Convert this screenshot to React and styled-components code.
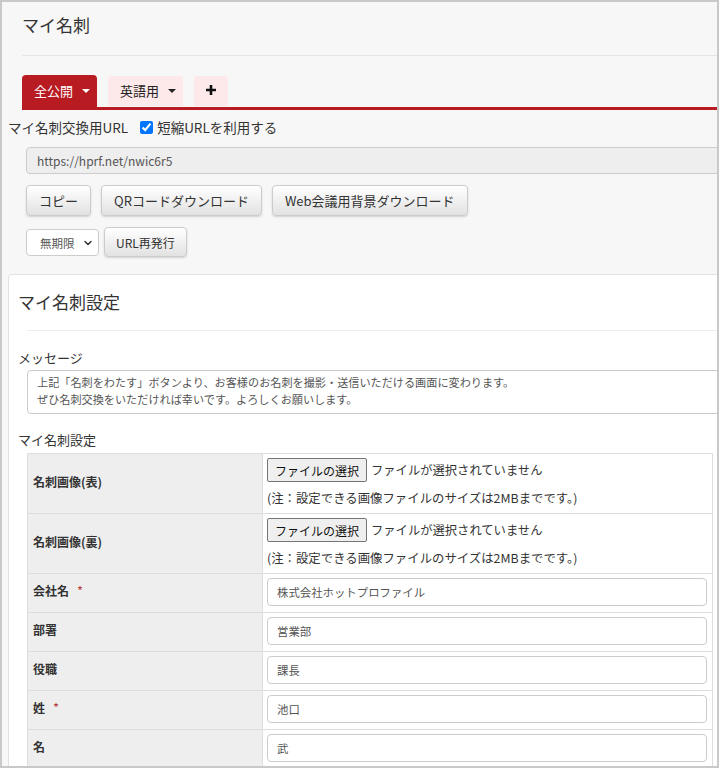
import styled, { createGlobalStyle } from "styled-components";
import { ChevronDown } from "lucide-react";

const GlobalStyle = createGlobalStyle`
  html, body {
    margin: 0;
    padding: 0;
    background: #ffffff;
  }
  body {
    font-family: "Noto Sans CJK JP", "Noto Sans", sans-serif;
    color: #333;
  }
  * {
    box-sizing: border-box;
  }
`;

const Frame = styled.div`
  width: 719px;
  height: 768px;
  border: 2px solid #c9c9c9;
  background: #f7f7f7;
  overflow: hidden;
`;

const PageHeader = styled.div`
  margin-left: 20px;
  padding: 11px 0 18px;
  border-bottom: 1px solid #e5e5e5;
`;

const Title = styled.h1`
  margin: 0;
  font-size: 17px;
  font-weight: 400;
  line-height: 24px;
  color: #333;
`;

const Tabs = styled.div`
  display: flex;
  align-items: flex-start;
  gap: 11px;
  margin: 19px 0 0 20px;
  border-bottom: 3px solid #b81c22;
`;

const Tab = styled.div`
  display: flex;
  align-items: center;
  justify-content: ${(p) => (p.$narrow ? "center" : "flex-start")};
  gap: 9px;
  width: ${(p) => (p.$narrow ? "34px" : "75px")};
  height: ${(p) => (p.$active ? "32px" : "30px")};
  margin-top: ${(p) => (p.$active ? "0" : "1px")};
  padding: 0 0 2px ${(p) => (p.$narrow ? "0" : "12px")};
  border-radius: 4px 4px 0 0;
  font-size: 13px;
  background: ${(p) => (p.$active ? "#b81c22" : "#fde8ea")};
  color: ${(p) => (p.$active ? "#fff" : "#222")};
`;

const Caret = styled.span`
  width: 0;
  height: 0;
  border-left: 4px solid transparent;
  border-right: 4px solid transparent;
  border-top: 4px solid ${(p) => p.$color};
  margin-top: 1px;
`;

const UrlRow = styled.div`
  display: flex;
  align-items: center;
  margin: 6px 0 0 6px;
  height: 22px;
  font-size: 13.5px;
  color: #333;
`;

const Check = styled.label`
  display: flex;
  align-items: center;
  gap: 4px;
  margin-left: 12px;

  input {
    width: 13px;
    height: 13px;
    margin: 0;
    accent-color: #0075ff;
  }
`;

const UrlField = styled.input`
  display: block;
  margin: 9px 0 0 24px;
  width: 740px;
  height: 27px;
  padding: 0 10px;
  border: 1px solid #ccc;
  border-radius: 4px 0 0 4px;
  background: #eee;
  color: #555;
  font-family: inherit;
  font-size: 12px;
  outline: none;
`;

const ButtonRow = styled.div`
  display: flex;
  align-items: center;
  gap: ${(p) => p.$gap || "10px"};
  margin: 11px 0 0 24px;
`;

const Button = styled.button`
  height: ${(p) => (p.$small ? "30px" : "31px")};
  padding: 0 ${(p) => (p.$small ? "11px" : "12px")};
  border: 1px solid #ccc;
  border-radius: 4px;
  background: linear-gradient(#ffffff, #e2e2e2);
  box-shadow: 0 1px 2px rgba(0, 0, 0, 0.15);
  font-family: inherit;
  font-size: ${(p) => (p.$small ? "12px" : "13px")};
  color: #333;
  cursor: pointer;
`;

const SelectWrap = styled.div`
  position: relative;
  width: 73px;
  height: 27px;

  svg {
    position: absolute;
    right: 5px;
    top: 8px;
    pointer-events: none;
  }
`;

const Select = styled.select`
  appearance: none;
  width: 100%;
  height: 100%;
  padding: 0 0 0 13px;
  border: 1px solid #ccc;
  border-radius: 4px;
  background: #fff;
  color: #555;
  font-family: inherit;
  font-size: 11.5px;
`;

const Panel = styled.section`
  margin: 17px 0 0 6px;
  width: 740px;
  padding: 15px 0 40px 9px;
  border: 1px solid #e2e2e2;
  border-radius: 4px;
  background: #fff;
`;

const PanelTitle = styled.h2`
  margin: 0;
  font-size: 17px;
  font-weight: 400;
  line-height: 24px;
  color: #333;
`;

const Divider = styled.div`
  margin: 16px 0 0 9px;
  height: 1px;
  background: #eee;
`;

const FieldLabel = styled.div`
  margin-top: ${(p) => p.$top};
  font-size: 13px;
  line-height: 20px;
  color: #333;
`;

const Message = styled.textarea`
  display: block;
  margin: 2px 0 0 9px;
  width: 720px;
  height: 44px;
  padding: 3px 9px;
  border: 1px solid #ccc;
  border-radius: 4px;
  resize: none;
  overflow: hidden;
  font-family: inherit;
  font-size: 11.15px;
  line-height: 17px;
  color: #555;
  outline: none;
`;

const Table = styled.table`
  margin: 3px 0 0 9px;
  width: 686px;
  border-collapse: collapse;
  table-layout: fixed;
`;

const LabelCell = styled.th`
  width: 235px;
  padding: 0 5px 5px;
  border: 1px solid #ddd;
  background: #eee;
  text-align: left;
  vertical-align: middle;
  font-size: 12px;
  font-weight: 700;
  color: #333;
`;

const Required = styled.span`
  margin-left: 8px;
  color: #b5413f;
  font-weight: 400;
  font-size: 13px;
`;

const ValueCell = styled.td`
  padding: 4px 5px 6px 4px;
  border: 1px solid #ddd;
  background: #fff;
`;

const FileLine = styled.div`
  display: flex;
  align-items: center;
  gap: 4px;
  font-size: 12.3px;
  color: #333;
`;

const FileButton = styled.button`
  height: 24px;
  padding: 0 7px;
  border: 1px solid #767676;
  border-radius: 2px;
  background: #efefef;
  font-family: inherit;
  font-size: 12px;
  color: #111;
`;

const Note = styled.div`
  margin-top: 7px;
  font-size: 12.4px;
  line-height: 18px;
  color: #333;
`;

const TextInput = styled.input`
  display: block;
  width: 100%;
  height: 28px;
  padding: 0 9px;
  border: 1px solid #ccc;
  border-radius: 4px;
  font-family: inherit;
  font-size: 11.4px;
  color: #555;
  outline: none;
`;

const fields = [
  { label: "会社名", value: "株式会社ホットプロファイル", required: true },
  { label: "部署", value: "営業部" },
  { label: "役職", value: "課長" },
  { label: "姓", value: "池口", required: true },
  { label: "名", value: "武" },
];

function FileRow({ label }) {
  return (
    <tr>
      <LabelCell>{label}</LabelCell>
      <ValueCell>
        <FileLine>
          <FileButton type="button">ファイルの選択</FileButton>
          ファイルが選択されていません
        </FileLine>
        <Note>(注：設定できる画像ファイルのサイズは2MBまでです。)</Note>
      </ValueCell>
    </tr>
  );
}

function App() {
  return (
    <Frame>
      <GlobalStyle />
      <PageHeader>
        <Title>マイ名刺</Title>
      </PageHeader>

      <Tabs>
        <Tab $active>
          全公開
          <Caret $color="#fff" />
        </Tab>
        <Tab>
          英語用
          <Caret $color="#222" />
        </Tab>
        <Tab $narrow>
          <svg width="12" height="12" viewBox="0 0 12 12">
            <path d="M6 1v10M1 6h10" stroke="#111" strokeWidth="2.6" />
          </svg>
        </Tab>
      </Tabs>

      <UrlRow>
        マイ名刺交換用URL
        <Check>
          <input type="checkbox" defaultChecked />
          短縮URLを利用する
        </Check>
      </UrlRow>

      <UrlField readOnly defaultValue="https://hprf.net/nwic6r5" />

      <ButtonRow>
        <Button>コピー</Button>
        <Button>QRコードダウンロード</Button>
        <Button>Web会議用背景ダウンロード</Button>
      </ButtonRow>

      <ButtonRow $gap="5px">
        <SelectWrap>
          <Select defaultValue="none">
            <option value="none">無期限</option>
          </Select>
          <ChevronDown size={12} strokeWidth={3} color="#333" />
        </SelectWrap>
        <Button $small>URL再発行</Button>
      </ButtonRow>

      <Panel>
        <PanelTitle>マイ名刺設定</PanelTitle>
        <Divider />
        <FieldLabel $top="17px">メッセージ</FieldLabel>
        <Message
          readOnly
          defaultValue={
            "上記「名刺をわたす」ボタンより、お客様のお名刺を撮影・送信いただける画面に変わります。\nぜひ名刺交換をいただければ幸いです。よろしくお願いします。"
          }
        />
        <FieldLabel $top="16px">マイ名刺設定</FieldLabel>
        <Table>
          <tbody>
            <FileRow label="名刺画像(表)" />
            <FileRow label="名刺画像(裏)" />
            {fields.map((f) => (
              <tr key={f.label}>
                <LabelCell>
                  {f.label}
                  {f.required && <Required>*</Required>}
                </LabelCell>
                <ValueCell>
                  <TextInput defaultValue={f.value} />
                </ValueCell>
              </tr>
            ))}
          </tbody>
        </Table>
      </Panel>
    </Frame>
  );
}

export default App;
